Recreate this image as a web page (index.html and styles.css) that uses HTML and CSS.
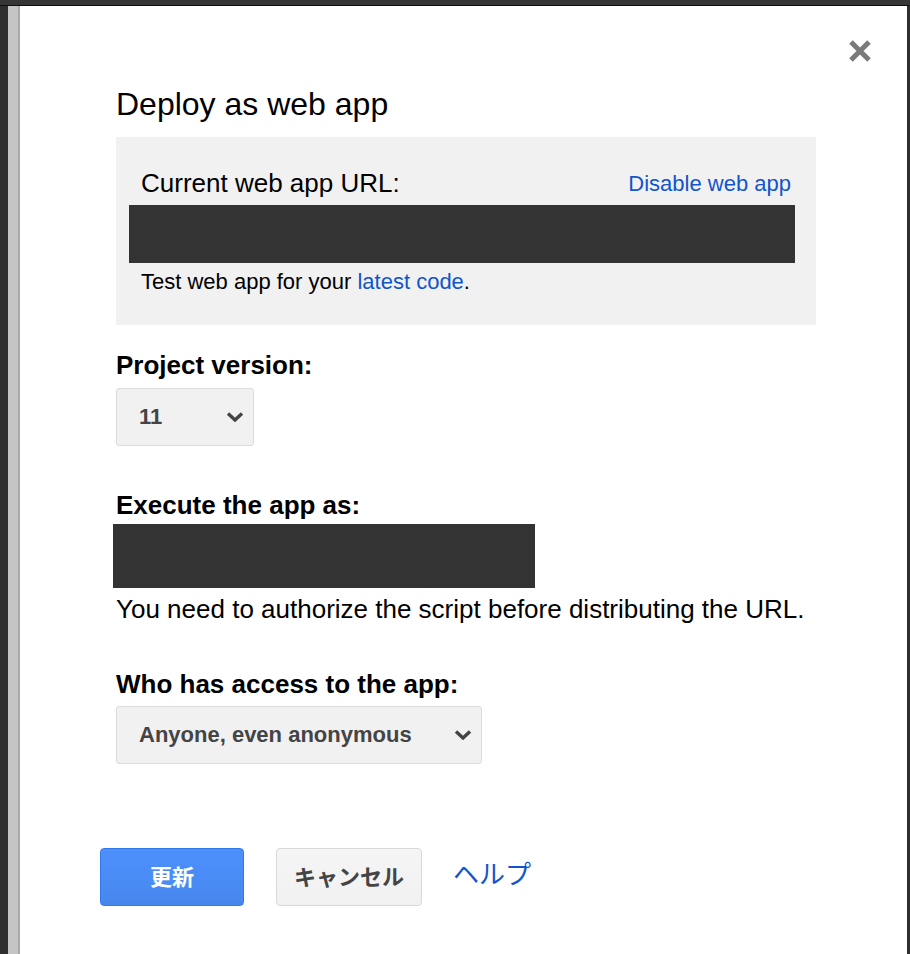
FILE: index.html
```html
<!DOCTYPE html>
<html lang="en">
<head>
<meta charset="utf-8">
<title>Deploy as web app</title>
<link rel="stylesheet" href="styles.css">
</head>
<body>
<div class="topbar"></div>
<div class="main">
  <div class="edge-dark"></div>
  <div class="edge-gray"></div>
  <div class="dialog">
    <button class="close" aria-label="Close">
      <svg width="24" height="24" viewBox="0 0 24 24"><path d="M3 3 L21 21 M21 3 L3 21" stroke="#7a7a7a" stroke-width="5" fill="none"/></svg>
    </button>
    <h1 class="title">Deploy as web app</h1>
    <div class="panel">
      <div class="panel-head">
        <span class="panel-label">Current web app URL:</span>
        <a class="link small" href="#">Disable web app</a>
      </div>
      <div class="redact url-bar"></div>
      <p class="test-line">Test web app for your <a class="link" href="#">latest code</a>.</p>
    </div>

    <div class="label label-version">Project version:</div>
    <div class="select select-version"><span>11</span><svg class="chev" width="18" height="10" viewBox="0 0 18 10"><path d="M2 1.5 L9 8 L16 1.5" stroke="#444" stroke-width="3.4" fill="none"/></svg></div>

    <div class="label label-exec">Execute the app as:</div>
    <div class="redact user-bar"></div>
    <p class="note">You need to authorize the script before distributing the URL.</p>

    <div class="label label-access">Who has access to the app:</div>
    <div class="select select-access"><span>Anyone, even anonymous</span><svg class="chev" width="18" height="10" viewBox="0 0 18 10"><path d="M2 1.5 L9 8 L16 1.5" stroke="#444" stroke-width="3.4" fill="none"/></svg></div>

    <div class="buttons">
      <button class="btn btn-primary">更新</button>
      <button class="btn btn-cancel">キャンセル</button>
      <a class="help" href="#">ヘルプ</a>
    </div>
  </div>
  <div class="edge-right"></div>
</div>
</body>
</html>
```
FILE: styles.css
```css
html, body {
  margin: 0;
  padding: 0;
  height: 100%;
}
body {
  background: #333333;
  font-family: "Liberation Sans", "Noto Sans CJK JP", sans-serif;
  color: #000;
  overflow: hidden;
}
.topbar {
  height: 5px;
  background: #363636;
  border-bottom: 1px solid #0e0e0e;
}
.main {
  display: flex;
  height: 948px;
}
.edge-dark {
  width: 8px;
  background: #2f2f2f;
}
.edge-gray {
  width: 10px;
  background: #c5c5c5;
  border-right: 2px solid #a9a9a9;
}
.edge-right {
  width: 3px;
  background: #2f2f2f;
}
.dialog {
  flex: 1;
  background: #fff;
  position: relative;
  padding: 80px 0 0 96px;
  box-sizing: border-box;
}
.close {
  position: absolute;
  top: 33px;
  right: 35px;
  width: 24px;
  height: 24px;
  padding: 0;
  border: 0;
  background: transparent;
  filter: blur(0.5px);
}
.close svg { display: block; }
.title {
  margin: 0;
  font-size: 32px;
  line-height: 36px;
  font-weight: normal;
}
.panel {
  margin-top: 15px;
  width: 700px;
  box-sizing: border-box;
  background: #f1f1f1;
  padding: 31px 21px 30px 13px;
}
.panel-head {
  display: flex;
  justify-content: space-between;
  align-items: baseline;
  padding: 0 4px 0 12px;
  line-height: 30px;
}
.panel-label {
  font-size: 26px;
}
.link {
  color: #1155cc;
  text-decoration: none;
}
.small {
  font-size: 22px;
  position: relative;
  top: -1px;
}
.redact {
  background: #333333;
}
.url-bar {
  margin-top: 5px;
  height: 58px;
}
.test-line {
  margin: 6px 0 0 12px;
  font-size: 22px;
  line-height: 26px;
}
.label {
  font-size: 26px;
  line-height: 30px;
  font-weight: bold;
}
.label-version { margin-top: 25px; }
.label-exec { margin-top: 44px; }
.label-access { margin-top: 45px; }
.select {
  display: flex;
  align-items: center;
  justify-content: space-between;
  box-sizing: border-box;
  height: 58px;
  padding: 0 9px 0 22px;
  background: #f1f1f1;
  border: 1px solid #dcdcdc;
  border-radius: 3px;
  color: #444;
  font-size: 22px;
  font-weight: bold;
}
.select-version {
  margin-top: 8px;
  width: 138px;
}
.select-access {
  margin-top: 7px;
  width: 366px;
}
.chev { display: block; }
.user-bar {
  margin: 4px 0 0 -3px;
  width: 422px;
  height: 64px;
}
.note {
  margin: 6px 0 0;
  font-size: 26px;
  line-height: 30px;
}
.buttons {
  display: flex;
  align-items: center;
  margin: 84px 0 0 -16px;
}
.btn {
  box-sizing: border-box;
  height: 58px;
  border-radius: 4px;
  font-family: "Liberation Sans", "Noto Sans CJK JP", sans-serif;
  font-size: 22px;
  font-weight: bold;
  padding: 0 0 5px;
}
.btn-primary {
  width: 144px;
  background: linear-gradient(#4d90fe, #4787ed);
  border: 1px solid #3079ed;
  color: #fff;
}
.btn-cancel {
  margin-left: 32px;
  width: 146px;
  background: linear-gradient(#f5f5f5, #f1f1f1);
  border: 1px solid #d9d9d9;
  color: #444;
}
.help {
  margin-left: 31px;
  font-size: 26px;
  color: #1155cc;
  text-decoration: none;
  margin-top: -9px;
}
```
